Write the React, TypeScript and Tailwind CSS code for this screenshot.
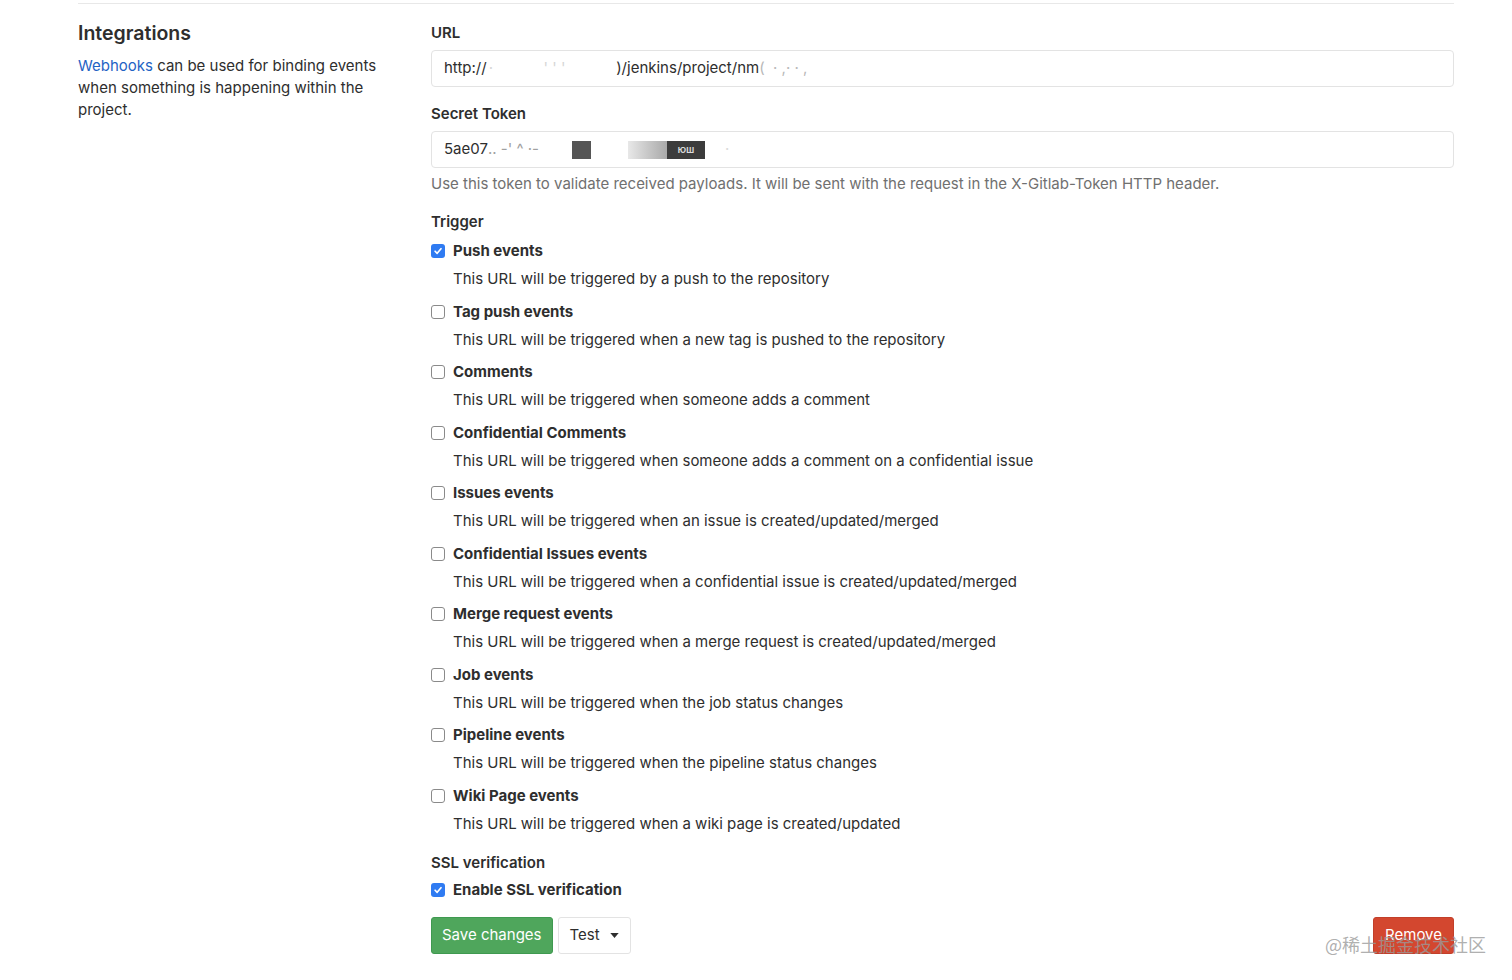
import * as React from 'react';

const triggers = [
  { label: 'Push events', desc: 'This URL will be triggered by a push to the repository', checked: true },
  { label: 'Tag push events', desc: 'This URL will be triggered when a new tag is pushed to the repository' },
  { label: 'Comments', desc: 'This URL will be triggered when someone adds a comment' },
  { label: 'Confidential Comments', desc: 'This URL will be triggered when someone adds a comment on a confidential issue' },
  { label: 'Issues events', desc: 'This URL will be triggered when an issue is created/updated/merged' },
  { label: 'Confidential Issues events', desc: 'This URL will be triggered when a confidential issue is created/updated/merged' },
  { label: 'Merge request events', desc: 'This URL will be triggered when a merge request is created/updated/merged' },
  { label: 'Job events', desc: 'This URL will be triggered when the job status changes' },
  { label: 'Pipeline events', desc: 'This URL will be triggered when the pipeline status changes' },
  { label: 'Wiki Page events', desc: 'This URL will be triggered when a wiki page is created/updated' },
];

function Checkbox({ checked }: { checked?: boolean }) {
  if (checked) {
    return (
      <span className="flex h-[14px] w-[14px] shrink-0 items-center justify-center rounded-[3px] bg-[#2f7bf2]">
        <svg viewBox="0 0 12 12" className="h-[10px] w-[10px]" fill="none" stroke="white" strokeWidth="2" strokeLinecap="round" strokeLinejoin="round">
          <path d="M2.5 6.3 L5 8.8 L9.6 3.2" />
        </svg>
      </span>
    );
  }
  return <span className="h-[14px] w-[14px] shrink-0 rounded-[3px] border border-[#8a8a8a] bg-white" />;
}

export default function App() {
  return (
    <div className="relative h-[980px] overflow-hidden bg-white font-['Inter','Noto_Sans',sans-serif] text-[15px] text-[#2e2e2e]">
      <div className="ml-[78px] mr-[58px] mt-[3px] border-t border-[#e8e8e8]">
        <div className="flex pt-[18px]">
          {/* left description column */}
          <div className="w-[353px] shrink-0 pr-[30px]">
            <h4 className="-mt-[2px] text-[19.5px] font-semibold leading-[26px] text-[#2e2e2e]">Integrations</h4>
            <p className="mt-[9px] leading-[22px]">
              <a href="#" className="text-[#1f63c4]">Webhooks</a> can be used for binding events when something is happening within the project.
            </p>
          </div>

          {/* form column */}
          <div className="flex-1">
            <label className="block font-semibold leading-[22px]">URL</label>
            <div className="mt-[6px] flex h-[37px] items-center rounded-[4px] border border-[#e3e3e3] px-[12px]">
              <span>http://</span>
              <span className="ml-[2px] text-[#d6d6d6]">·&nbsp;&nbsp;&nbsp;&nbsp;&nbsp;&nbsp;&nbsp;&nbsp;&nbsp;&nbsp;&nbsp;&nbsp;'&nbsp;'&nbsp;'&nbsp;&nbsp;&nbsp;&nbsp;&nbsp;&nbsp;&nbsp;&nbsp;&nbsp;&nbsp;&nbsp;&nbsp;</span>
              <span>)/jenkins/project/nm</span>
              <span className="text-[#b8b8b8]">(&nbsp;&nbsp;·&nbsp;,·&nbsp;·&nbsp;,</span>
            </div>

            <label className="mt-[16px] block font-semibold leading-[22px]">Secret Token</label>
            <div className="mt-[6px] flex h-[37px] items-center rounded-[4px] border border-[#e3e3e3] px-[12px]">
              <span>5ae07</span>
              <span className="text-[#a0a0a0]">.. -' ^ ·-</span>
              <span className="ml-[33px] h-[18px] w-[19px] bg-[#555555]" />
              <span className="ml-[37px] flex h-[18px] w-[77px]">
                <span className="flex-1 bg-gradient-to-r from-[#e8e8e8] to-[#a9a9a9]" />
                <span className="flex w-[38px] items-center justify-center bg-[#3c3c3c] text-[8px] font-bold leading-none text-[#dcdcdc]">ЮШ</span>
              </span>
              <span className="ml-[20px] text-[#dadada]">·</span>
            </div>
            <p className="mt-[5px] leading-[22px] text-[#707070]">
              Use this token to validate received payloads. It will be sent with the request in the X-Gitlab-Token HTTP header.
            </p>

            <label className="mt-[16px] block font-semibold leading-[22px]">Trigger</label>
            <div className="mt-[7px] flex flex-col">
              {triggers.map((t) => (
                <div key={t.label} className="mb-[10.5px]">
                  <div className="flex items-center gap-[8px]">
                    <Checkbox checked={t.checked} />
                    <span className="font-bold leading-[22px]">{t.label}</span>
                  </div>
                  <p className="mt-[6px] pl-[22px] leading-[22px]">{t.desc}</p>
                </div>
              ))}
            </div>

            <label className="mt-[6.5px] block font-semibold leading-[22px]">SSL verification</label>
            <div className="mt-[5px] flex items-center gap-[8px]">
              <Checkbox checked />
              <span className="font-bold leading-[22px]">Enable SSL verification</span>
            </div>

            <div className="mt-[16px] flex items-center">
              <button className="h-[37px] rounded-[3px] border border-[#3f9950] bg-[#4fa65c] px-[10px] text-white">Save changes</button>
              <button className="ml-[5px] flex h-[37px] items-center gap-[10px] rounded-[3px] border border-[#e3e3e3] bg-white px-[11px] text-[#2e2e2e]">
                Test
                <svg viewBox="0 0 10 6" className="h-[5px] w-[9px]" fill="#2e2e2e"><path d="M0 0 H10 L5 6 Z" /></svg>
              </button>
              <button className="ml-auto h-[37px] rounded-[3px] border border-[#c23f2a] bg-[#d3472f] px-[11px] text-white">Remove</button>
            </div>
          </div>
        </div>
      </div>

      {/* watermark */}
      <div className="pointer-events-none absolute left-[1325px] top-[931px] font-['Noto_Sans_CJK_SC',sans-serif] text-[18px] leading-[26px] text-[#9a9a9a]/80">
        @稀土掘金技术社区
      </div>
    </div>
  );
}
